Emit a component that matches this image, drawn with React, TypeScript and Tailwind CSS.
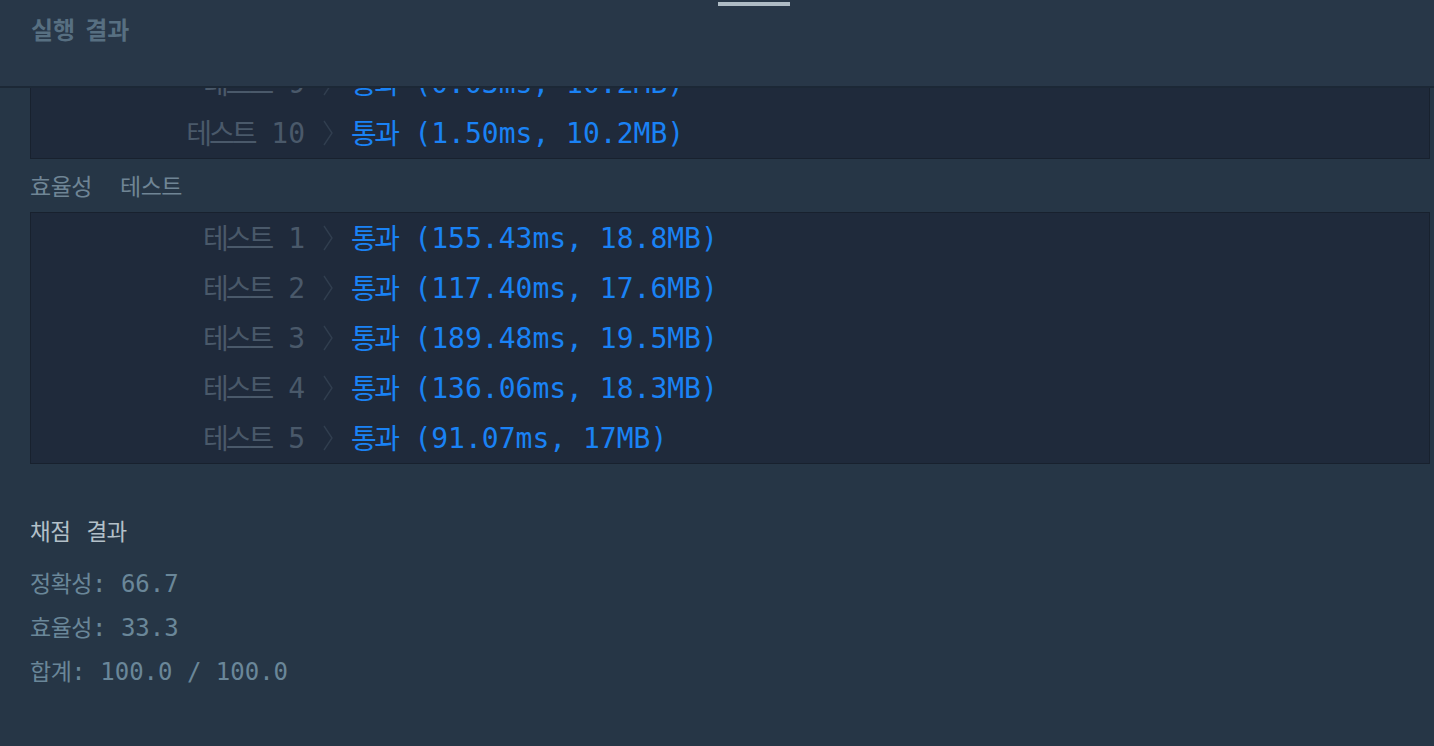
const efficiency = [
  {n: 1, time: "155.43ms", mem: "18.8MB"},
  {n: 2, time: "117.40ms", mem: "17.6MB"},
  {n: 3, time: "189.48ms", mem: "19.5MB"},
  {n: 4, time: "136.06ms", mem: "18.3MB"},
  {n: 5, time: "91.07ms", mem: "17MB"},
];

const ko = "font-['Noto_Sans_CJK_KR',sans-serif]";

function Row({n, time, mem}: {n: number; time: string; mem: string}) {
  return (
    <div className="flex h-[50px] items-center whitespace-pre text-[28px] leading-none">
      <div className="w-[274px] text-right text-[#4a596a]">
        <span className="font-['Noto_Sans_CJK_KR',sans-serif] align-[-1px] text-[28px] leading-none tracking-[-3px]">
          테스트
        </span>
        {" " + n}
      </div>
      <div className="flex w-[46px] justify-center">
        <svg className="h-[26px] w-[10px]" fill="none" stroke="#313e4f" strokeWidth={1.4} viewBox="0 0 10 26">
          <path d="M1 1l8 12-8 12" />
        </svg>
      </div>
      <div className="text-[#1a82f5]">
        <span className="font-['Noto_Sans_CJK_KR',sans-serif] align-[-1px] text-[28px] leading-none tracking-[-2.5px]">
          통과
        </span>
        {` (${time}, ${mem})`}
      </div>
    </div>
  );
}

function Score({label, value}: {label: string; value: string}) {
  return (
    <div className="flex h-[44px] items-center">
      <span className="whitespace-pre leading-none">
        <span className={`${ko} text-[23px] leading-none tracking-[-0.5px]`}>{label}</span>
        {": " + value}
      </span>
    </div>
  );
}

export default function App() {
  return (
    <div className="flex h-screen flex-col overflow-hidden bg-[#263646] font-['DejaVu_Sans_Mono','Noto_Sans_CJK_KR',monospace]">
      <header className="relative z-10 h-[88px] shrink-0 border-b-2 border-[#1c2836] bg-[#283748]">
        <div className="ml-[718px] mt-[2px] h-[4px] w-[72px] bg-[#aebbc4]" />
        <h2 className="ml-[31px] mt-[8px] flex gap-[10px] font-['Noto_Sans_CJK_KR',sans-serif] text-[24px] font-bold leading-[30px] text-[#576f81]">
          <span>실행</span>
          <span>결과</span>
        </h2>
      </header>
      <main className="flex-1 overflow-hidden pl-[30px] pr-[4px]">
        {/* 정확성 테스트 (스크롤됨) */}
        <div className="-mt-[31px] border border-[#18212e] bg-[#1f2a3b]">
          <Row n={9} time="0.03ms" mem="10.2MB" />
          <Row n={10} time="1.50ms" mem="10.2MB" />
        </div>
        <div className={`${ko} flex h-[53px] items-center gap-[28px] text-[23px] tracking-[-0.5px] text-[#6f8595]`}>
          <span>효율성</span>
          <span>테스트</span>
        </div>
        <div className="border border-[#18212e] bg-[#1f2a3b]">
          {efficiency.map((t) => (
            <Row key={t.n} {...t} />
          ))}
        </div>
        {/* 채점 결과 */}
        <div className={`${ko} mt-[53px] flex h-[26px] items-center gap-[16px] text-[22.5px] leading-none tracking-[-0.5px] text-[#b3c0c9]`}>
          <span>채점</span>
          <span>결과</span>
        </div>
        <div className="mt-[18px] text-[24px] text-[#6a8799]">
          <Score label="정확성" value="66.7" />
          <Score label="효율성" value="33.3" />
          <Score label="합계" value="100.0 / 100.0" />
        </div>
      </main>
    </div>
  );
}
